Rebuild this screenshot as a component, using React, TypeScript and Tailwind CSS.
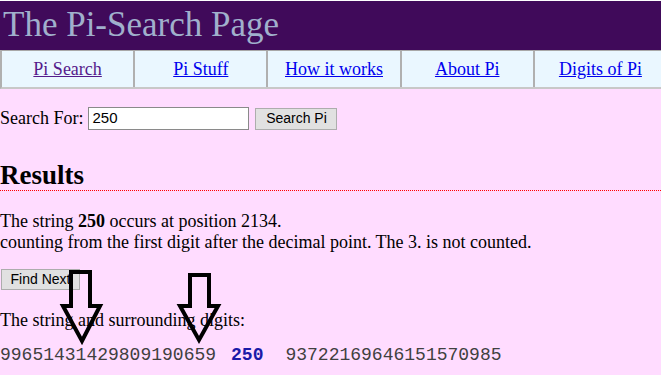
import React from "react";

function Arrow({ sx1, sx2, top, hy, hx1, hx2, tx, ty }: { sx1: number; sx2: number; top: number; hy: number; hx1: number; hx2: number; tx: number; ty: number }) {
  const pts = `${sx1},${top} ${sx2},${top} ${sx2},${hy} ${hx2},${hy} ${tx},${ty} ${hx1},${hy} ${sx1},${hy}`;
  return <polygon points={pts} fill="none" stroke="#000" strokeWidth={4} strokeLinejoin="miter" />;
}

export default function App() {
  const links = ["Pi Search", "Pi Stuff", "How it works", "About Pi", "Digits of Pi"];
  return (
    <div className="relative w-[661px] h-[375px] overflow-hidden bg-[#ffdcff] font-['Liberation_Serif',serif] text-[18px] text-black">
      <div className="h-px bg-white" />
      <div className="h-[49px] bg-[#400a5a] flex items-center pl-[3px]">
        <span className="text-[35px] leading-none text-[#a0b0cc] mt-[-2px]">The Pi-Search Page</span>
      </div>
      <div className="flex w-[668px] h-[39px] border-t border-b-2 border-l-2 border-t-[#a8a8a8] border-b-[#c8c8c8] border-l-[#b0b0b0] bg-[#eaf7ff]">
        {links.map((l, i) => (
          <div
            key={l}
            className="flex-1 flex items-center justify-center border-r-2 border-[#b0b0b0]"
          >
            <a href="#" className={"underline leading-[21px] " + (i === 0 ? "text-[#551a8b]" : "text-[#0000ee]")}>
              {l}
            </a>
          </div>
        ))}
      </div>
      <div className="mt-[18px] flex items-center h-[23px]">
        <span className="leading-[21px]">Search For:</span>
        <div className="ml-[5px] w-[161px] h-[23px] border border-[#8a8a8a] bg-white flex items-center pl-[3px] font-['Liberation_Sans',sans-serif] text-[15px]">
          250
        </div>
        <div className="ml-[6px] w-[82px] h-[22px] border border-[#adadad] bg-[#e1e1e1] flex items-center justify-center font-['Liberation_Sans',sans-serif] text-[14px]">
          Search Pi
        </div>
      </div>
      <h2 className="mt-[30px] h-[31px] leading-[30px] text-[27px] font-bold border-b border-dotted border-[#ff0000]">Results</h2>
      <div className="mt-[20px] leading-[21px]">
        <div>
          The string <b>250</b> occurs at position 2134.
        </div>
        <div>counting from the first digit after the decimal point. The 3. is not counted.</div>
      </div>
      <div className="mt-[16px] ml-px w-[79px] h-[21px] border border-[#adadad] bg-[#e1e1e1] flex items-center justify-center font-['Liberation_Sans',sans-serif] text-[14px]">
        Find Next
      </div>
      <div className="mt-[20px] leading-[21px]">The string and surrounding digits:</div>
      <div className="mt-[14px] leading-[21px] flex font-['Liberation_Mono',monospace] text-[#404040] text-[18px] whitespace-pre">
        <span>99651431429809190659</span>
        <span className="ml-[15px] font-bold text-[#1a1aa8]">250</span>
        <span className="ml-[22px]">93722169646151570985</span>
      </div>
      <svg className="absolute left-0 top-0 pointer-events-none" width={661} height={375}>
        <Arrow sx1={71} sx2={90} top={272} hy={306} hx1={63} hx2={100} tx={82} ty={341} />
        <Arrow sx1={190} sx2={209} top={275} hy={306} hx1={180} hx2={218} tx={199} ty={340} />
      </svg>
    </div>
  );
}
